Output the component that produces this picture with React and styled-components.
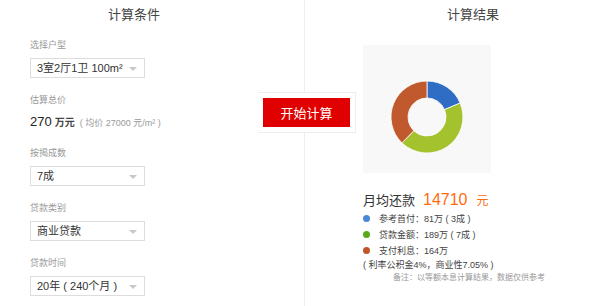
import React from 'react'
import styled, {createGlobalStyle} from 'styled-components'

const GlobalStyle = createGlobalStyle`
  html, body {
    margin: 0;
    padding: 0;
    background: #fff;
  }
  body {
    font-family: "Liberation Sans", "Noto Sans CJK SC", sans-serif;
    color: #333;
  }
`

const fields = [
  {label: '选择户型', value: '3室2厅1卫 100m²'},
  {label: '按揭成数', value: '7成'},
  {label: '贷款类别', value: '商业贷款'},
  {label: '贷款时间', value: '20年 ( 240个月 )'},
]

const parts = [
  {name: '参考首付：81万 ( 3成 )', amount: 81, color: '#2f6dc4', dot: '#4a87d6'},
  {name: '贷款金额：189万 ( 7成 )', amount: 189, color: '#a4c22e', dot: '#5ca81c'},
  {name: '支付利息：164万', amount: 164, color: '#c05a2e', dot: '#bf552a'},
]

const Page = styled.div`
  position: relative;
  display: flex;
  width: 590px;
  height: 306px;
  overflow: hidden;
`

const LeftCol = styled.div`
  width: 305px;
  padding: 7px 0 0 30px;
  box-sizing: border-box;
  border-right: 1px solid #eeeeee;
`

const RightCol = styled.div`
  flex: 1;
  padding: 7px 0 0 58px;
  box-sizing: border-box;
`

const Title = styled.h2`
  margin: 0 0 0 ${(p) => p.$indent}px;
  font-size: 13px;
  font-weight: normal;
  line-height: 16px;
  color: #444;
`

const Field = styled.div`
  margin-top: 16px;
`

const Label = styled.div`
  font-size: 9px;
  line-height: 12px;
  color: #999;
  margin-bottom: 7px;
`

const Select = styled.div`
  position: relative;
  width: 115px;
  height: 20px;
  box-sizing: border-box;
  border: 1px solid #dddddd;
  padding-left: 6px;
  font-size: 11px;
  line-height: 18px;
  color: #333;
  &::after {
    content: '';
    position: absolute;
    right: 7px;
    top: 8px;
    border-left: 4px solid transparent;
    border-right: 4px solid transparent;
    border-top: 4px solid #c8c8c8;
  }
`

const Price = styled.div`
  margin-top: 7px;
  height: 18px;
  display: flex;
  align-items: baseline;
  gap: 3px;
  line-height: 18px;
`

const PriceNum = styled.span`
  font-size: 13px;
  color: #222;
`

const PriceUnit = styled.span`
  font-size: 10px;
  font-weight: bold;
  color: #444;
`

const PriceNote = styled.span`
  margin-left: 2px;
  font-size: 9px;
  color: #999;
`

const StartBox = styled.div`
  position: absolute;
  left: 258px;
  top: 92px;
  width: 98px;
  height: 41px;
  box-sizing: border-box;
  border: 1px solid #eeeeee;
  border-left: none;
  background: #fff;
  display: flex;
  align-items: center;
  padding-left: 5px;
`

const StartButton = styled.button`
  width: 87px;
  height: 29px;
  border: none;
  background: #e00000;
  color: #fff;
  font-family: "Noto Sans CJK SC", sans-serif;
  font-size: 13px;
  padding: 0;
  cursor: pointer;
`

const ChartBox = styled.div`
  margin-top: 22px;
  width: 128px;
  height: 128px;
  background: #f8f8f8;
`

const Monthly = styled.div`
  margin-top: 17px;
  height: 20px;
  display: flex;
  align-items: baseline;
  line-height: 20px;
`

const MonthlyLabel = styled.span`
  font-size: 13px;
  color: #333;
`

const MonthlyNum = styled.span`
  margin-left: 8px;
  font-size: 16px;
  color: #ff6a10;
`

const MonthlyUnit = styled.span`
  margin-left: 9px;
  font-size: 12px;
  color: #ff6a10;
`

const LegendRow = styled.div`
  display: flex;
  align-items: center;
  height: 16px;
  font-size: 9px;
  color: #444;
`

const Dot = styled.span`
  width: 7px;
  height: 7px;
  border-radius: 50%;
  background: ${(p) => p.$color};
  margin: 0 9px 0 0;
`

const RateNote = styled.div`
  font-size: 9px;
  line-height: 14px;
  color: #444;
`

const Footnote = styled.div`
  margin-left: 30px;
  font-size: 8px;
  line-height: 12px;
  color: #999;
`

function arcPath(cx, cy, r0, r1, a0, a1) {
  const p = (r, a) => {
    const t = ((a - 90) * Math.PI) / 180
    return [cx + r * Math.cos(t), cy + r * Math.sin(t)]
  }
  const large = a1 - a0 > 180 ? 1 : 0
  const [x0, y0] = p(r1, a0)
  const [x1, y1] = p(r1, a1)
  const [x2, y2] = p(r0, a1)
  const [x3, y3] = p(r0, a0)
  return `M${x0} ${y0} A${r1} ${r1} 0 ${large} 1 ${x1} ${y1} L${x2} ${y2} A${r0} ${r0} 0 ${large} 0 ${x3} ${y3} Z`
}

function Donut() {
  const total = parts.reduce((s, p) => s + p.amount, 0)
  let angle = 0
  return (
    <svg width="128" height="128" viewBox="0 0 128 128">
      {parts.map((p) => {
        const a0 = angle
        angle += (p.amount / total) * 360
        return (
          <path
            key={p.name}
            d={arcPath(64, 72, 19, 36, a0, angle)}
            fill={p.color}
            stroke="#fff"
            strokeWidth="0.8"
          />
        )
      })}
    </svg>
  )
}

export default function App() {
  return (
    <Page>
      <GlobalStyle />
      <LeftCol>
        <Title $indent={78}>计算条件</Title>
        <Field>
          <Label>{fields[0].label}</Label>
          <Select>{fields[0].value}</Select>
        </Field>
        <Field>
          <Label>估算总价</Label>
          <Price>
            <PriceNum>270</PriceNum>
            <PriceUnit>万元</PriceUnit>
            <PriceNote>( 均价 27000 元/m² )</PriceNote>
          </Price>
        </Field>
        {fields.slice(1).map((f) => (
          <Field key={f.label}>
            <Label>{f.label}</Label>
            <Select>{f.value}</Select>
          </Field>
        ))}
      </LeftCol>
      <RightCol>
        <Title $indent={84}>计算结果</Title>
        <ChartBox>
          <Donut />
        </ChartBox>
        <Monthly>
          <MonthlyLabel>月均还款</MonthlyLabel>
          <MonthlyNum>14710</MonthlyNum>
          <MonthlyUnit>元</MonthlyUnit>
        </Monthly>
        {parts.map((p) => (
          <LegendRow key={p.name}>
            <Dot $color={p.dot} />
            {p.name}
          </LegendRow>
        ))}
        <RateNote>( 利率公积金4%，商业性7.05% )</RateNote>
        <Footnote>备注：以等额本息计算结果，数据仅供参考</Footnote>
      </RightCol>
      <StartBox>
        <StartButton>开始计算</StartButton>
      </StartBox>
    </Page>
  )
}
